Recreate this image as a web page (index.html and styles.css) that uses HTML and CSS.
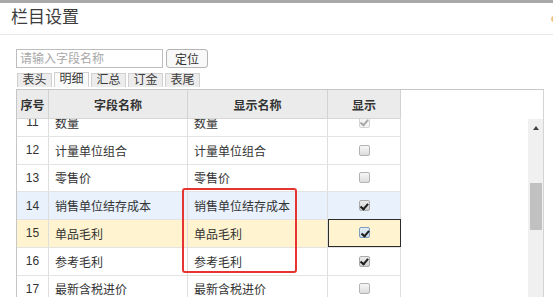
FILE: index.html
```html
<!DOCTYPE html>
<html lang="zh">
<head>
<meta charset="utf-8">
<title>栏目设置</title>
<link rel="stylesheet" href="styles.css">
</head>
<body>
<div class="dialog">
  <div class="titlebar">栏目设置<span class="close-dot"></span></div>
  <div class="content">
    <div class="search">
      <input class="search-input" type="text" placeholder="请输入字段名称">
      <button class="locate-btn">定位</button>
    </div>
    <div class="tabs">
      <span class="tab">表头</span>
      <span class="tab active">明细</span>
      <span class="tab">汇总</span>
      <span class="tab">订金</span>
      <span class="tab">表尾</span>
    </div>
    <div class="grid">
      <div class="grid-main">
        <div class="row head">
          <div class="cell c-no">序号</div>
          <div class="cell c-field center">字段名称</div>
          <div class="cell c-disp center">显示名称</div>
          <div class="cell c-show">显示</div>
        </div>
        <div class="body">
          <div class="rows">
            <div class="row">
              <div class="cell c-no">11</div>
              <div class="cell c-field">数量</div>
              <div class="cell c-disp">数量</div>
              <div class="cell c-show"><span class="cb checked disabled"></span></div>
            </div>
            <div class="row">
              <div class="cell c-no">12</div>
              <div class="cell c-field">计量单位组合</div>
              <div class="cell c-disp">计量单位组合</div>
              <div class="cell c-show"><span class="cb"></span></div>
            </div>
            <div class="row">
              <div class="cell c-no">13</div>
              <div class="cell c-field">零售价</div>
              <div class="cell c-disp">零售价</div>
              <div class="cell c-show"><span class="cb"></span></div>
            </div>
            <div class="row hover">
              <div class="cell c-no">14</div>
              <div class="cell c-field">销售单位结存成本</div>
              <div class="cell c-disp">销售单位结存成本</div>
              <div class="cell c-show"><span class="cb checked"></span></div>
            </div>
            <div class="row selected">
              <div class="cell c-no">15</div>
              <div class="cell c-field">单品毛利</div>
              <div class="cell c-disp">单品毛利</div>
              <div class="cell c-show focus"><span class="cb checked focused"></span></div>
            </div>
            <div class="row">
              <div class="cell c-no">16</div>
              <div class="cell c-field">参考毛利</div>
              <div class="cell c-disp">参考毛利</div>
              <div class="cell c-show"><span class="cb checked"></span></div>
            </div>
            <div class="row">
              <div class="cell c-no">17</div>
              <div class="cell c-field">最新含税进价</div>
              <div class="cell c-disp">最新含税进价</div>
              <div class="cell c-show"><span class="cb"></span></div>
            </div>
          </div>
        </div>
      </div>
      <div class="scrollbar">
        <div class="sb-spacer"></div>
        <div class="sb-track">
          <div class="sb-arrow"></div>
          <div class="sb-gap"></div>
          <div class="sb-thumb"></div>
        </div>
      </div>
    </div>
  </div>
  <div class="highlight"></div>
</div>
</body>
</html>
```

FILE: styles.css
```css
html, body {
  margin: 0;
  padding: 0;
  overflow: hidden;
  background: #ffffff;
}
body {
  width: 553px;
  height: 297px;
  font-family: "Liberation Sans", "Noto Sans CJK SC", sans-serif;
  font-size: 12px;
  color: #333333;
}
.dialog {
  position: relative;
  height: 297px;
}
.titlebar {
  position: relative;
  border-top: 3px solid #a8a8a8;
  height: 31px;
  line-height: 30px;
  border-bottom: 1px solid #e8e8e8;
  padding-left: 11px;
  font-size: 17px;
  color: #3c3c3c;
}
.close-dot {
  position: absolute;
  right: -4px;
  top: 13px;
  width: 6px;
  height: 6px;
  border-radius: 50%;
  background: #f3c27e;
}
.content {
  padding: 14px 0 0 16px;
}
.search {
  display: flex;
  align-items: center;
  gap: 3px;
  height: 19px;
}
.search-input {
  box-sizing: border-box;
  width: 147px;
  height: 19px;
  margin: 0;
  padding: 0 3px;
  border: 1px solid #bdbdbd;
  font-family: inherit;
  font-size: 12px;
  color: #333;
  outline: none;
}
.search-input::placeholder {
  color: #a8a8a8;
}
.locate-btn {
  box-sizing: border-box;
  width: 42px;
  height: 19px;
  margin: 0;
  padding: 0;
  border: 1px solid #b4b4b4;
  border-radius: 3px;
  background: #f8f8f8;
  font-family: inherit;
  font-size: 12px;
  color: #333;
}
.tabs {
  display: flex;
  align-items: flex-end;
  gap: 2px;
  margin-top: 3px;
  height: 16px;
  padding-left: 1px;
}
.tab {
  box-sizing: border-box;
  width: 35px;
  height: 14px;
  line-height: 13px;
  text-align: center;
  border: 1px solid #d0d0d0;
  border-bottom: none;
  background: #ececec;
  font-size: 12px;
  color: #3a3a3a;
}
.tab.active {
  height: 15px;
  background: #fafafa;
}
.grid {
  display: flex;
  box-sizing: border-box;
  width: 528px;
  height: 220px;
  margin-top: 2px;
  border: 1px solid #c6c6c6;
  border-bottom: none;
  border-right-color: #d4d4d4;
}
.grid-main {
  flex: 1;
  display: flex;
  flex-direction: column;
  min-width: 0;
}
.row {
  display: flex;
  box-sizing: border-box;
  width: 384px;
  height: 27.75px;
  border-bottom: 1px solid #e3e3e3;
  background: #ffffff;
}
.row.head {
  height: 29px;
  background: #ebebeb;
  border-bottom: 1px solid #d6d6d6;
  font-weight: bold;
  color: #333;
}
.row.hover {
  background: #e8f1fc;
}
.row.selected {
  background: #fff4cf;
}
.cell {
  box-sizing: border-box;
  display: flex;
  align-items: center;
  padding-left: 6px;
  border-right: 1px solid #dedede;
  white-space: nowrap;
}
.head .cell {
  border-right-color: #d2d2d2;
}
.cell.center {
  justify-content: center;
  padding-left: 0;
}
.c-no {
  width: 32px;
  justify-content: center;
  padding-left: 0;
}
.c-field {
  width: 139px;
}
.c-disp {
  width: 140px;
}
.c-show {
  width: 73px;
  justify-content: center;
  padding-left: 0;
}
.cell.focus {
  border: 1.5px solid #2b2b2b;
  margin-top: -1px;
  height: calc(100% + 1px);
}
.body {
  flex: 1;
  overflow: hidden;
}
.rows {
  margin-top: -10px;
}
.cb {
  box-sizing: border-box;
  position: relative;
  display: inline-block;
  width: 11px;
  height: 11px;
  border: 1px solid #b3b3b3;
  border-radius: 2px;
  background: linear-gradient(#f7f7f7, #dcdcdc);
}
.cb.checked {
  background: linear-gradient(#ececec, #cfcfcf);
  border-color: #aaaaaa;
}
.cb.checked::after {
  content: "";
  position: absolute;
  left: 2.5px;
  top: 0.5px;
  width: 3px;
  height: 5.5px;
  border-right: 2px solid #1e1e1e;
  border-bottom: 2px solid #1e1e1e;
  transform: rotate(40deg);
}
.cb.disabled {
  border-color: #d4d4d4;
  background: #f4f4f4;
}
.cb.disabled::after {
  border-color: #a9a9a9;
}
.cb.focused {
  border-color: #7f9cbf;
  background: linear-gradient(#e6eef7, #c8d6e6);
}
.scrollbar {
  width: 15px;
  display: flex;
  flex-direction: column;
}
.sb-spacer {
  height: 29px;
}
.sb-track {
  flex: 1;
  background: #f0f0f0;
  display: flex;
  flex-direction: column;
  align-items: center;
}
.sb-arrow {
  margin-top: 7px;
  width: 0;
  height: 0;
  border-left: 3.5px solid transparent;
  border-right: 3.5px solid transparent;
  border-bottom: 4px solid #404040;
}
.sb-gap {
  height: 53px;
}
.sb-thumb {
  width: 12px;
  height: 47px;
  background: #c1c1c1;
}
.highlight {
  position: absolute;
  left: 182px;
  top: 188px;
  width: 115px;
  height: 85px;
  box-sizing: border-box;
  border: 2px solid #e53431;
  border-radius: 3px;
  pointer-events: none;
}
```
